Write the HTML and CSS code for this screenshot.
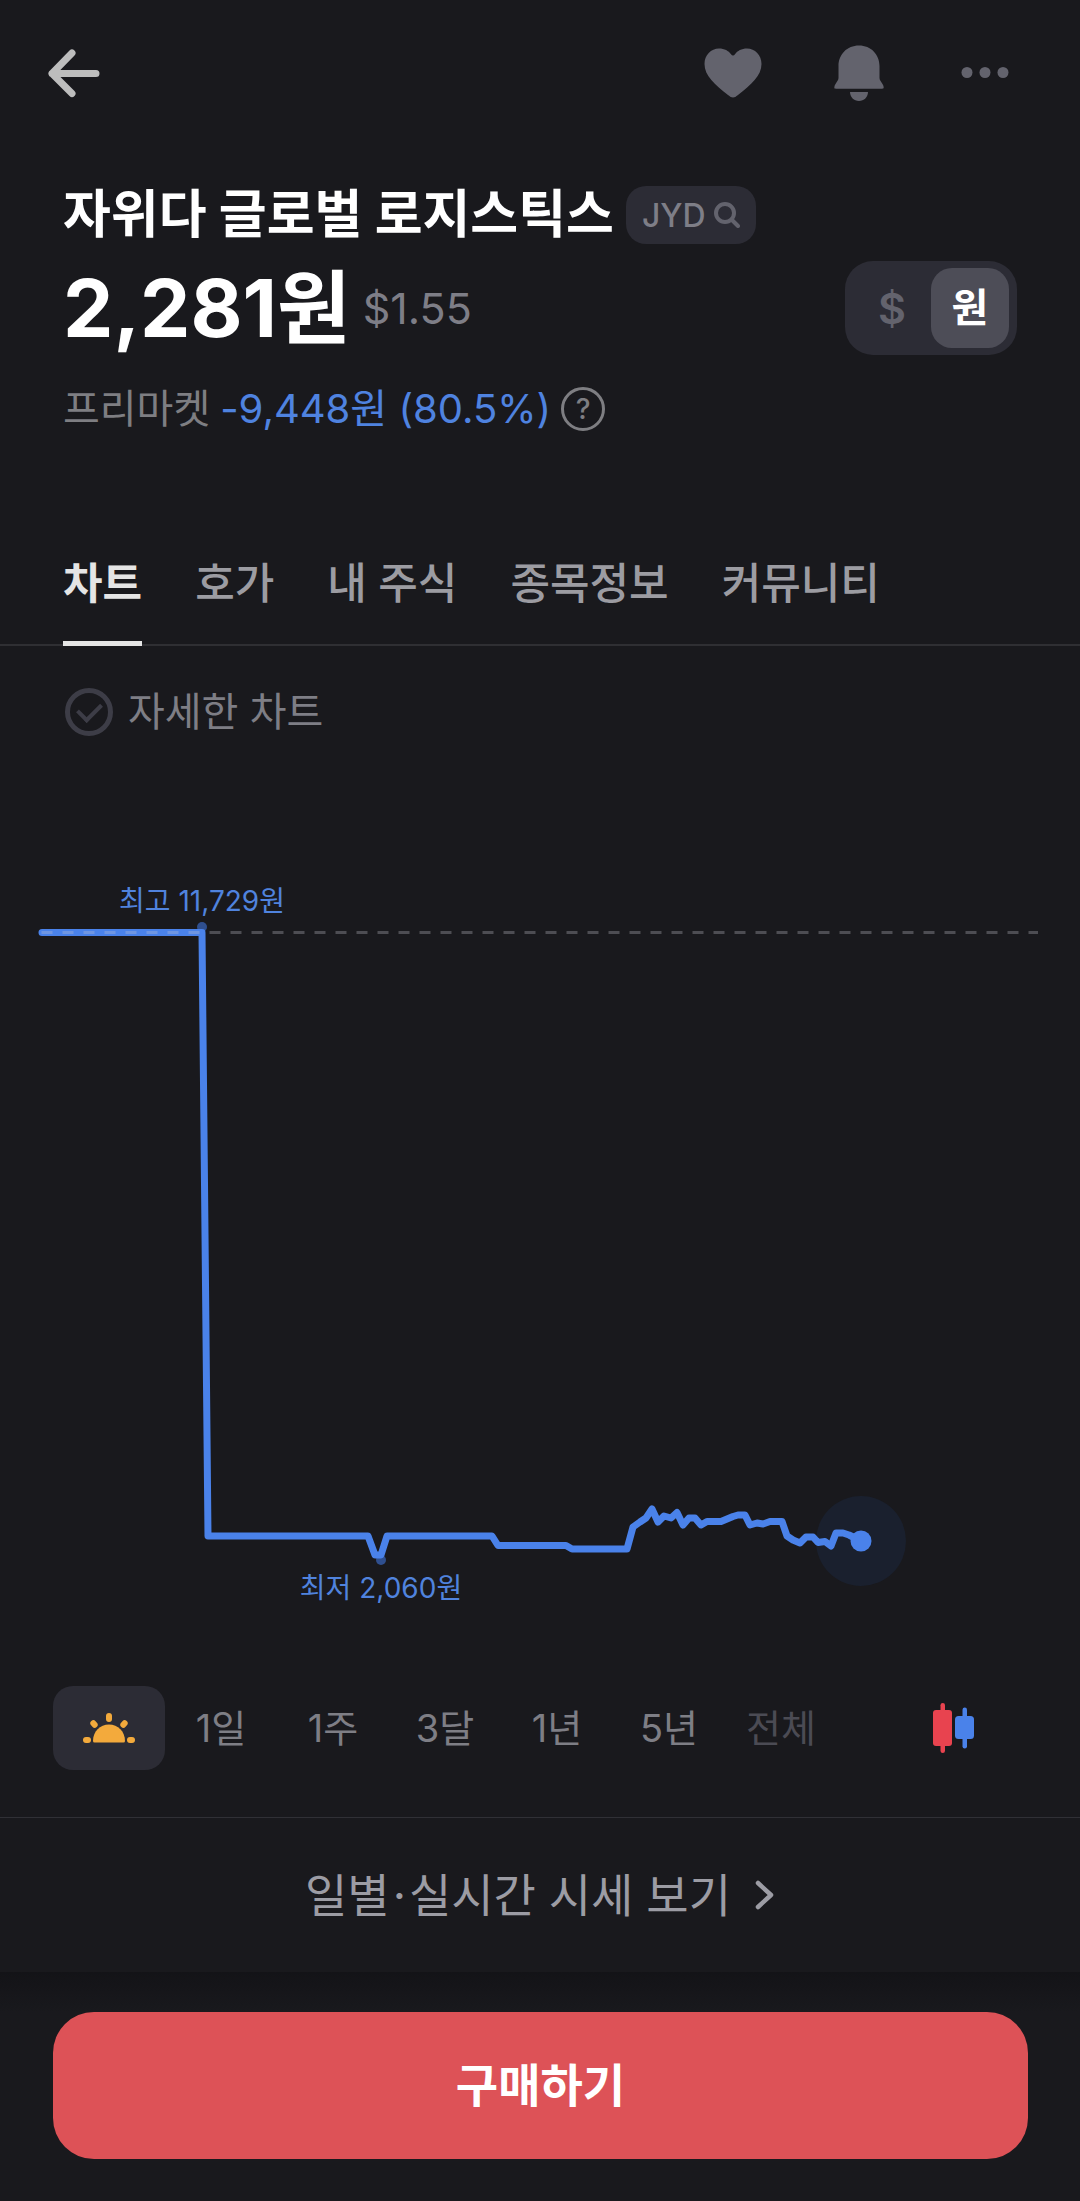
FILE: index.html
```html
<!DOCTYPE html>
<html lang="ko">
<head>
  <meta charset="UTF-8">
  <meta name="viewport" content="width=device-width, initial-scale=1">
  <title>자위다 글로벌 로지스틱스</title>
  <link rel="stylesheet" href="styles.css">
</head>
<body>

  <header class="topbar">
    <button class="icon-btn" aria-label="뒤로">
      <svg width="60" height="60" viewBox="0 0 60 60" fill="none" stroke="#bdbdbd" stroke-width="7" stroke-linecap="round" stroke-linejoin="round"><path d="M29 10L9 30.500l20 20M9 30.500h44"/></svg>
    </button>
    <div class="actions">
      <button class="icon-btn" aria-label="관심">
        <svg width="60" height="60" viewBox="0 0 60 60" fill="#63636d"><path d="M30 54.500c-1.500 0-3-.8-5-2.500C12 41.500 1.500 33 1.500 21 1.500 12 8 5.500 16 5.500c5.500 0 9.500 2.200 12 5.800 1.200 1.600 2.800 1.600 4 0C34.500 7.700 38.500 5.500 44 5.500c8 0 14.500 6.500 14.500 15.500 0 12-10.500 20.500-23.500 31-2 1.700-3.500 2.500-5 2.500z"/></svg>
      </button>
      <button class="icon-btn" aria-label="알림">
        <svg width="60" height="60" viewBox="0 0 60 60" fill="#63636d"><path d="M30 2.500C18 2.500 9.500 11.500 9.500 23v12c0 2-1.500 3.500-3 6-.8 1.300-1.200 2.500-1.200 3.500 0 .8.600 1.200 1.500 1.200h46.400c.9 0 1.500-.4 1.500-1.200 0-1-.4-2.200-1.200-3.500-1.500-2.500-3-4-3-6V23C50.500 11.500 42 2.500 30 2.500zM21 49h18c0 5-4 9-9 9s-9-4-9-9z"/></svg>
      </button>
      <button class="icon-btn" aria-label="더보기">
        <svg width="60" height="60" viewBox="0 0 60 60" fill="#63636d"><circle cx="12" cy="29.500" r="5.500"/><circle cx="30" cy="29.500" r="5.500"/><circle cx="48" cy="29.500" r="5.500"/></svg>
      </button>
    </div>
  </header>

  <section class="summary">
    <div class="name-row">
      <h1>자위다 글로벌 로지스틱스</h1>
      <button class="ticker">JYD
        <svg width="26" height="26" viewBox="0 0 26 26" fill="none" stroke="#63636d" stroke-width="4" stroke-linecap="round"><circle cx="11" cy="11" r="9"/><path d="M18 18l6 6"/></svg>
      </button>
    </div>
    <div class="price-row">
      <strong class="price">2,281원</strong>
      <span class="usd">$1.55</span>
      <div class="currency">
        <button class="dollar">$</button>
        <button class="on">원</button>
      </div>
    </div>
    <div class="change-row">
      <span class="market">프리마켓</span>
      <span class="change">-9,448원 (80.5%)</span>
      <button class="help" aria-label="도움말">?</button>
    </div>
  </section>

  <nav class="tabs">
    <a class="tab active" href="#chart">차트</a>
    <a class="tab" href="#quote">호가</a>
    <a class="tab" href="#mine">내 주식</a>
    <a class="tab" href="#info">종목정보</a>
    <a class="tab" href="#community">커뮤니티</a>
  </nav>

  <main id="chart">
    <div class="detail">
      <input type="checkbox" id="detailChart">
      <label for="detailChart">자세한 차트</label>
    </div>

    <svg class="chart" viewBox="0 736 1080 950">
      <circle cx="202" cy="927" r="5" fill="#2f4f8f"/>
      <circle cx="381" cy="1560" r="5" fill="#2f4f8f"/>
      <circle cx="861" cy="1541" r="45" fill="#1a202e"/>
      <polyline class="line" points="42,932.500 202,932.500 208,1536 368,1536 375,1555 381,1555 387,1536 492,1536 498,1545.500 566,1545.500 572,1549 627,1549 633,1527 640,1522 646,1518 652,1509 658,1522 664,1516 671,1518 677,1512.500 683,1525 689,1518 695,1518 701,1525 707,1521.500 721,1521.500 733,1516.500 738,1515 745,1515 750,1525 757,1523 763,1524 770,1521.500 782,1521.500 787,1536 793,1540 800,1543 806,1537 813,1537 818,1542.500 825,1541.500 831,1546 836,1533 843,1533 849,1535 861,1541"/>
      <path class="base" d="M41.500 932.500H1038"/>
      <circle cx="861" cy="1541" r="10.500" fill="#4a82ea"/>
      <text x="202" y="911" text-anchor="middle">최고 11,729원</text>
      <text x="381" y="1598" text-anchor="middle">최저 2,060원</text>
    </svg>

    <div class="ranges">
      <button class="range on" aria-label="장중">
        <svg width="54" height="32" viewBox="0 0 54 32" fill="#f3aa3c"><path d="M12.500 30.500a1.500 1.500 0 0 1-1.500-1.500C11 19.500 18 12.500 27 12.500s16 7 16 16.500a1.500 1.500 0 0 1-1.500 1.500z"/><rect x="24" y="1" width="6" height="9" rx="3"/><rect x="1" y="25" width="8" height="6" rx="3"/><rect x="45" y="25" width="8" height="6" rx="3"/><rect x="8" y="9" width="8" height="6" rx="3" transform="rotate(48 12 12)"/><rect x="38" y="9" width="8" height="6" rx="3" transform="rotate(-48 42 12)"/></svg>
      </button>
      <button class="range">1일</button>
      <button class="range">1주</button>
      <button class="range">3달</button>
      <button class="range">1년</button>
      <button class="range">5년</button>
      <button class="range" disabled>전체</button>
      <button class="candle" aria-label="캔들 차트">
        <svg width="42" height="50" viewBox="0 0 42 50"><g fill="#e8434f"><rect x="7.500" y="0" width="4.500" height="50" rx="2.200"/><rect x="0" y="7" width="19" height="36" rx="3"/></g><g fill="#4a82ea"><rect x="29.500" y="4.500" width="4.500" height="41" rx="2.200"/><rect x="22" y="13" width="19" height="23" rx="3.500"/></g></svg>
      </button>
    </div>
  </main>

  <a class="more" href="#daily">
    <span>일별<span class="dot">·</span>실시간 시세 보기</span>
    <svg width="20" height="30" viewBox="0 0 20 30" fill="none" stroke="#9c9ca4" stroke-width="4.500" stroke-linecap="round" stroke-linejoin="round"><path d="M3 3l13 12L3 27"/></svg>
  </a>

  <footer class="bottom">
    <button class="buy">구매하기</button>
  </footer>

</body>
</html>
```
FILE: styles.css
```css
* {
  box-sizing: border-box;
}
body {
  margin: 0;
  background: #19191d;
  color: #fff;
  font-family: Inter, "Noto Sans CJK KR", sans-serif;
}
button {
  margin: 0;
  padding: 0;
  border: none;
  background: none;
  color: inherit;
  font: inherit;
  cursor: pointer;
}
a {
  color: inherit;
  text-decoration: none;
}
svg {
  display: block;
}
.topbar {
  display: flex;
  justify-content: space-between;
  align-items: center;
  height: 146px;
  padding: 0 65px 0 43px;
}
.actions {
  display: flex;
  gap: 66px;
}
.summary {
  padding: 40px 63px 0;
}
.name-row {
  display: flex;
  align-items: center;
  gap: 12px;
}
h1 {
  margin: 0;
  font-size: 52px;
  line-height: 58px;
  font-weight: 700;
}
.ticker {
  display: flex;
  align-items: center;
  gap: 8px;
  height: 58px;
  padding: 0 16px;
  border-radius: 20px;
  background: #2c2c35;
  color: #7e7e87;
  font-size: 32px;
  font-weight: 500;
}
.price-row {
  display: flex;
  align-items: center;
  gap: 12px;
  margin-top: 17px;
  line-height: 94px;
}
.price {
  font-size: 80px;
  font-weight: 700;
}
.usd {
  color: #7e7e87;
  font-size: 43px;
}
.currency {
  display: flex;
  margin-left: auto;
  padding: 7px 8px;
  border-radius: 28px;
  background: #2c2c35;
  color: #63636d;
  font-size: 40px;
  font-weight: 700;
}
.currency button {
  width: 78px;
  height: 80px;
  border-radius: 21px;
  line-height: 80px;
}
.currency .dollar {
  font-size: 43px;
  font-weight: 600;
}
.currency .on {
  background: #4d4d57;
  color: #fff;
}
.change-row {
  display: flex;
  align-items: center;
  gap: 10px;
  margin-top: 32px;
  font-size: 40px;
  line-height: 44px;
}
.market {
  color: #7e7e82;
}
.change {
  color: #4f83e0;
}
.help {
  width: 44px;
  height: 44px;
  border: 3px solid #7e7e82;
  border-radius: 50%;
  color: #7e7e82;
  font-size: 28px;
  font-weight: 500;
  line-height: 38px;
}
.tabs {
  display: flex;
  gap: 53px;
  margin-top: 122px;
  padding: 0 63px;
  background: linear-gradient(#2f2f33, #2f2f33) bottom / 100% 2px no-repeat;
  color: #9c9ca2;
  font-size: 43px;
  font-weight: 500;
  line-height: 60px;
}
.tab {
  padding-bottom: 33px;
}
.active {
  color: #e5e5e5;
  font-weight: 700;
  background: linear-gradient(#e5e5e5, #e5e5e5) bottom / 100% 5px no-repeat;
}
.detail {
  display: flex;
  align-items: center;
  gap: 15px;
  margin: 42px 65px 0;
  color: #7e7e85;
  font-size: 40px;
  line-height: 48px;
}
.detail input {
  appearance: none;
  display: grid;
  place-items: center;
  width: 48px;
  height: 48px;
  margin: 0;
  border: 5px solid #3d3d47;
  border-radius: 50%;
}
.detail input::after {
  content: "";
  width: 11px;
  height: 19px;
  margin-bottom: 6px;
  border: solid #3d3d47;
  border-width: 0 4px 4px 0;
  transform: rotate(45deg);
}
.detail input:checked,
.detail input:checked::after {
  border-color: #4a82ea;
}
.chart {
  width: 100%;
  height: auto;
}
.chart text {
  fill: #5083de;
  font-size: 28px;
}
.line {
  fill: none;
  stroke: #4a82ea;
  stroke-width: 7px;
  stroke-linecap: round;
  stroke-linejoin: round;
}
.base {
  stroke: rgba(200, 200, 210, 0.3);
  stroke-width: 3px;
  stroke-dasharray: 11 10;
}
.ranges {
  display: flex;
  align-items: center;
  padding: 0 53px 47px;
  color: #7e7e85;
  font-size: 38px;
  line-height: 80px;
}
.range {
  display: flex;
  flex: 0 1 112px;
  align-items: center;
  justify-content: center;
  height: 84px;
  border-radius: 20px;
}
.range.on {
  background: #2c2c35;
}
.range:disabled {
  color: #4b4b54;
}
.candle {
  margin: 0 52px 0 auto;
}
.more {
  display: flex;
  align-items: center;
  justify-content: center;
  gap: 24px;
  border-top: 1px solid #303036;
  color: #9c9ca4;
  font-size: 46px;
  line-height: 154px;
}
.dot {
  margin: 0 3px;
}
.bottom {
  padding: 40px 52px 42px 53px;
  background: linear-gradient(#131317, #19191d 40px);
}
.buy {
  display: block;
  width: 100%;
  border-radius: 41px;
  background: #dd5257;
  font-size: 46px;
  font-weight: 700;
  line-height: 147px;
}
```
